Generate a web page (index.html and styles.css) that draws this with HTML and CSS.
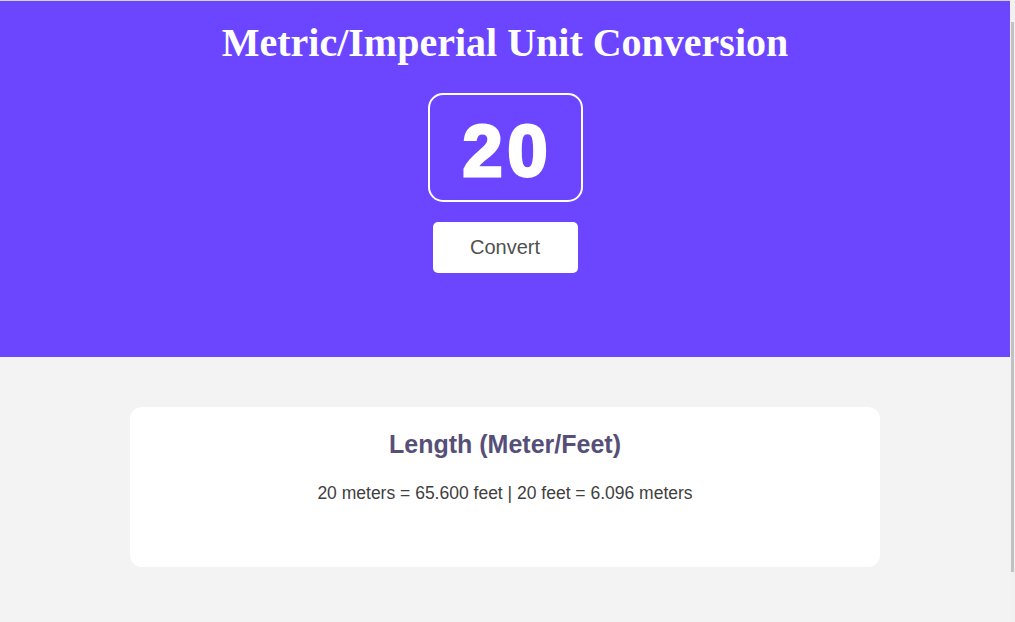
FILE: index.html
```html
<!DOCTYPE html>
<html lang="en">
<head>
<meta charset="utf-8">
<title>Metric/Imperial Unit Conversion</title>
<link rel="stylesheet" href="styles.css">
</head>
<body>
  <header class="hero">
    <h1 class="hero-title">Metric/Imperial Unit Conversion</h1>
    <div class="number-box"><span class="number-value">20</span></div>
    <button class="convert-btn" type="button">Convert</button>
  </header>
  <main class="content">
    <section class="card">
      <h2 class="card-title">Length (Meter/Feet)</h2>
      <p class="card-text">20 meters = 65.600 feet | 20 feet = 6.096 meters</p>
    </section>
  </main>
</body>
</html>
```

FILE: styles.css
```css
html {
  min-height: 100%;
  background-color: #f3f3f3;
  background-image:
    linear-gradient(#c2c2c2, #c2c2c2),
    linear-gradient(#f1f1f1, #f1f1f1);
  background-repeat: no-repeat;
  background-size: 3px 550px, 5px 100%;
  background-position: right 1px top 22px, right 0 top 0;
}

body {
  margin: 0 5px 0 0;
  border-top: 1px solid #d4d4d4;
  background: #f3f3f3;
  min-height: 621px;
  font-family: "Liberation Sans", Arial, sans-serif;
}

.hero {
  background: #6b45ff;
  display: flex;
  flex-direction: column;
  align-items: center;
  padding: 19px 0 84px;
}

.hero-title {
  margin: 0;
  font-family: "Liberation Serif", "Times New Roman", serif;
  font-weight: bold;
  font-size: 40px;
  line-height: 46px;
  color: #ffffff;
}

.number-box {
  margin-top: 27px;
  width: 155px;
  height: 109px;
  box-sizing: border-box;
  border: 2px solid #ffffff;
  border-radius: 15px;
  display: flex;
  align-items: center;
  justify-content: center;
  padding-top: 6px;
}

.number-value {
  font-family: "Liberation Sans", Arial, sans-serif;
  font-weight: bold;
  font-size: 72px;
  line-height: 1;
  letter-spacing: 5px;
  margin-right: -5px;
  color: #ffffff;
  -webkit-text-stroke: 3px #ffffff;
}

.convert-btn {
  margin-top: 20px;
  width: 145px;
  height: 51px;
  border: none;
  border-radius: 5px;
  background: #ffffff;
  color: #505050;
  font-family: "Liberation Sans", Arial, sans-serif;
  font-size: 20px;
  padding: 0;
}

.content {
  display: flex;
  justify-content: center;
  padding-top: 50px;
}

.card {
  width: 750px;
  height: 160px;
  box-sizing: border-box;
  background: #ffffff;
  border-radius: 12px;
  padding: 23px 20px;
  text-align: center;
}

.card-title {
  margin: 0;
  font-size: 25px;
  font-weight: bold;
  color: #564f78;
}

.card-text {
  margin: 24px 0 0;
  font-size: 17.5px;
  color: #404040;
}
```
